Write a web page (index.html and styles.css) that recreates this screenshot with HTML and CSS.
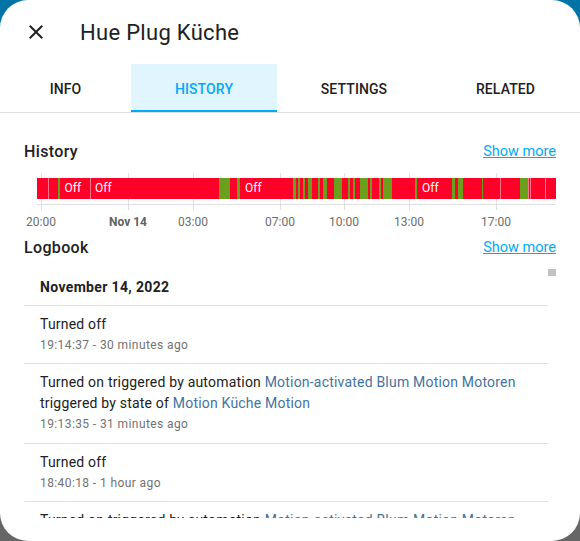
FILE: index.html
```html
<!DOCTYPE html>
<html lang="en">
<head>
<meta charset="utf-8">
<title>Hue Plug Küche</title>
<link rel="stylesheet" href="styles.css">
</head>
<body>
<div class="dialog">
  <header class="header">
    <button class="close" aria-label="Close">
      <svg viewBox="0 0 24 24" width="24" height="24"><path d="M19,6.41L17.59,5L12,10.59L6.41,5L5,6.41L10.59,12L5,17.59L6.41,19L12,13.41L17.59,19L19,17.59L13.41,12L19,6.41Z"/></svg>
    </button>
    <h1 class="title">Hue Plug Küche</h1>
  </header>
  <nav class="tabs">
    <div class="tab t1">Info</div>
    <div class="tab t2 active">History</div>
    <div class="tab t3">Settings</div>
    <div class="tab t4">Related</div>
  </nav>
  <main class="content">
    <div class="section-head">
      <h2>History</h2>
      <a class="more" href="#">Show more</a>
    </div>
    <div class="chart">
      <div class="grid" style="left:17px"></div>
      <div class="grid" style="left:104px"></div>
      <div class="grid" style="left:169px"></div>
      <div class="grid" style="left:256px"></div>
      <div class="grid" style="left:320px"></div>
      <div class="grid" style="left:385px"></div>
      <div class="grid" style="left:472px"></div>
      <div class="axis"></div>
      <div class="bar">
        <div class="seg off" style="width:11px"></div>
        <div class="seg off b" style="width:10px"></div>
        <div class="seg on" style="width:1.5px"></div>
        <div class="seg off lbl" style="width:30.5px">Off</div>
        <div class="seg off b lbl" style="width:129px">Off</div>
        <div class="seg on" style="width:11px"></div>
        <div class="seg off" style="width:7px"></div>
        <div class="seg on" style="width:3px"></div>
        <div class="seg off lbl" style="width:53px">Off</div>
        <div class="seg on" style="width:3px"></div>
        <div class="seg off" style="width:2px"></div>
        <div class="seg on" style="width:2px"></div>
        <div class="seg off" style="width:3px"></div>
        <div class="seg on" style="width:2px"></div>
        <div class="seg off" style="width:3px"></div>
        <div class="seg on" style="width:4px"></div>
        <div class="seg off" style="width:6px"></div>
        <div class="seg on" style="width:2px"></div>
        <div class="seg off" style="width:3px"></div>
        <div class="seg on" style="width:4px"></div>
        <div class="seg off" style="width:7px"></div>
        <div class="seg on" style="width:8px"></div>
        <div class="seg off" style="width:6px"></div>
        <div class="seg on" style="width:2px"></div>
        <div class="seg off" style="width:3px"></div>
        <div class="seg on" style="width:2px"></div>
        <div class="seg off" style="width:5px"></div>
        <div class="seg on" style="width:8px"></div>
        <div class="seg off" style="width:2px"></div>
        <div class="seg on" style="width:2px"></div>
        <div class="seg off" style="width:7px"></div>
        <div class="seg on" style="width:2px"></div>
        <div class="seg off" style="width:2px"></div>
        <div class="seg on" style="width:9px"></div>
        <div class="seg off" style="width:23px"></div>
        <div class="seg on" style="width:2px"></div>
        <div class="seg off lbl" style="width:35px">Off</div>
        <div class="seg on" style="width:3px"></div>
        <div class="seg off" style="width:3px"></div>
        <div class="seg on" style="width:5px"></div>
        <div class="seg off" style="width:19px"></div>
        <div class="seg on" style="width:1px"></div>
        <div class="seg off" style="width:17px"></div>
        <div class="seg off b" style="width:20px"></div>
        <div class="seg on" style="width:8px"></div>
        <div class="seg off b" style="width:2px"></div>
        <div class="seg off b" style="width:15px"></div>
        <div class="seg off b" style="width:11px"></div>
      </div>
      <span class="tick" style="left:17px">20:00</span>
      <span class="tick strong" style="left:104px">Nov 14</span>
      <span class="tick" style="left:169px">03:00</span>
      <span class="tick" style="left:256px">07:00</span>
      <span class="tick" style="left:320px">10:00</span>
      <span class="tick" style="left:385px">13:00</span>
      <span class="tick" style="left:472px">17:00</span>
    </div>
    <div class="section-head">
      <h2>Logbook</h2>
      <a class="more" href="#">Show more</a>
    </div>
    <div class="logbook">
      <div class="log-list">
        <div class="date">November 14, 2022</div>
        <div class="entry">
          <div class="msg">Turned off</div>
          <div class="time">19:14:37 - 30 minutes ago</div>
        </div>
        <div class="entry">
          <div class="msg">Turned on triggered by automation <a href="#">Motion-activated Blum Motion Motoren</a> triggered by state of <a href="#">Motion Küche Motion</a></div>
          <div class="time">19:13:35 - 31 minutes ago</div>
        </div>
        <div class="entry">
          <div class="msg">Turned off</div>
          <div class="time">18:40:18 - 1 hour ago</div>
        </div>
        <div class="entry">
          <div class="msg">Turned on triggered by automation <a href="#">Motion-activated Blum Motion Motoren</a></div>
        </div>
      </div>
      <div class="scrollbar"><div class="thumb"></div></div>
    </div>
  </main>
</div>
</body>
</html>
```
FILE: styles.css
```css
* { box-sizing: border-box; }
html, body {
  margin: 0;
  padding: 0;
  width: 580px;
  height: 541px;
  overflow: hidden;
}
body {
  background: linear-gradient(#0273a6 0, #0273a6 60px, #666666 60px);
  font-family: Roboto, "Noto Sans", sans-serif;
  color: #212121;
}
.dialog {
  width: 580px;
  height: 541px;
  background: #ffffff;
  border-radius: 28px;
  overflow: hidden;
  display: flex;
  flex-direction: column;
}
.header {
  height: 64px;
  display: flex;
  align-items: center;
  flex: none;
}
.close {
  margin-left: 24px;
  width: 24px;
  height: 24px;
  padding: 0;
  border: 0;
  background: none;
  display: flex;
}
.close svg { fill: #212121; }
.title {
  margin: 0 0 0 32px;
  font-size: 22px;
  font-weight: 400;
  line-height: 28px;
  letter-spacing: 0.3px;
  color: #212121;
  padding-top: 2px;
}
.tabs {
  display: flex;
  height: 49px;
  border-bottom: 1px solid #e0e0e0;
  flex: none;
}
.tab {
  height: 48px;
  display: flex;
  align-items: center;
  justify-content: center;
  text-transform: uppercase;
  font-size: 14px;
  font-weight: 500;
  letter-spacing: 0.1px;
  color: #212121;
  padding-top: 2px;
}
.t1 { width: 131px; }
.t2 { width: 146px; }
.t3 { width: 154px; }
.t4 { width: 149px; }
.tab.active {
  background: #e1f5fe;
  color: #03a9f4;
  border-bottom: 2px solid #03a9f4;
  padding-top: 4px;
}
.content {
  padding: 26px 24px 0;
  flex: 1;
  display: flex;
  flex-direction: column;
  min-height: 0;
}
.section-head {
  display: flex;
  justify-content: space-between;
  align-items: center;
  height: 24px;
  flex: none;
}
.section-head h2 {
  margin: 0;
  font-size: 16px;
  font-weight: 500;
  letter-spacing: 0.35px;
  color: #212121;
}
.more {
  color: #03a9f4;
  font-size: 14.5px;
  text-decoration: underline;
}
.chart {
  position: relative;
  height: 72px;
  flex: none;
}
.grid {
  position: absolute;
  top: 10px;
  width: 1px;
  height: 37px;
  background: #e0e0e0;
}
.axis {
  position: absolute;
  left: 13px;
  right: 0;
  top: 41px;
  height: 1px;
  background: #e0e0e0;
}
.bar {
  position: absolute;
  left: 13px;
  top: 15px;
  width: 519px;
  height: 21px;
  display: flex;
  overflow: hidden;
}
.seg {
  height: 21px;
  flex: none;
  color: #ffffff;
  font-size: 12px;
  line-height: 21px;
  overflow: hidden;
  white-space: nowrap;
}
.seg.lbl { padding-left: 5px; }
.seg.off { background: #ff0029; }
.seg.on { background: #6ba01f; }
.seg.b { box-shadow: inset 1px 0 rgba(255, 255, 255, 0.45); }
.tick {
  position: absolute;
  top: 51px;
  transform: translateX(-50%);
  font-size: 12px;
  line-height: 16px;
  color: #6e6e6e;
  white-space: nowrap;
}
.tick.strong { font-weight: 700; color: #616161; }
.logbook {
  margin-top: 10px;
  height: 249px;
  overflow: hidden;
  display: flex;
  flex: none;
}
.log-list {
  flex: 1;
  min-width: 0;
}
.scrollbar {
  width: 8px;
  flex: none;
}
.thumb {
  width: 8px;
  height: 8px;
  background: #c1c1c1;
  margin-top: -1px;
}
.date {
  padding: 8px 16px;
  font-size: 14px;
  font-weight: 700;
  line-height: 20px;
  letter-spacing: 0.35px;
  border-bottom: 1px solid #e0e0e0;
}
.entry {
  padding: 8px 16px;
  border-bottom: 1px solid #e0e0e0;
}
.msg {
  font-size: 14px;
  line-height: 21px;
  letter-spacing: 0.2px;
  color: #212121;
}
.msg a {
  color: #44739e;
  text-decoration: none;
}
.time {
  font-size: 12px;
  line-height: 20px;
  letter-spacing: 0.4px;
  color: #727272;
}
.entry:nth-child(3) .time { line-height: 21px; }
```
